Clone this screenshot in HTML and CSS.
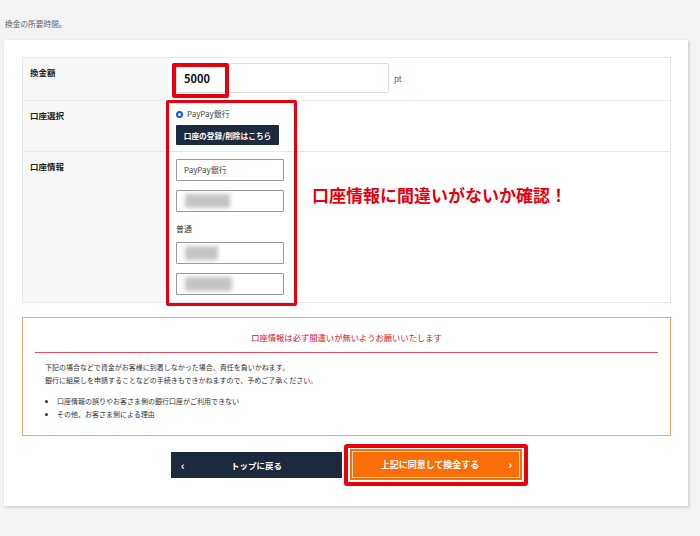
FILE: index.html
```html
<!DOCTYPE html>
<html lang="ja">
<head>
    <meta charset="UTF-8">
    <meta name="viewport" content="width=device-width, initial-scale=1.0">
    <title>換金</title>
    <link rel="stylesheet" href="styles.css">
</head>
<body>
    <p class="lead">換金の所要時間。</p>

    <div class="card">
        <div class="form-table">
            <div class="row row-amount">
                <div class="label">換金額</div>
                <div class="value">
                    <div class="amount-input">5000</div>
                    <span class="unit">pt</span>
                </div>
            </div>
            <div class="row row-select">
                <div class="label">口座選択</div>
                <div class="value value-col">
                    <label class="radio"><span class="radio-dot"></span>PayPay銀行</label>
                    <button class="btn-small">口座の登録/削除はこちら</button>
                </div>
            </div>
            <div class="row row-info">
                <div class="label">口座情報</div>
                <div class="value value-info">
                    <div class="fields">
                        <div class="field">PayPay銀行</div>
                        <div class="field"><span class="blur w45"></span></div>
                        <div class="field-label">普通</div>
                        <div class="field"><span class="blur w33"></span></div>
                        <div class="field"><span class="blur w47"></span></div>
                    </div>
                    <p class="check-note">口座情報に間違いがないか確認！</p>
                </div>
            </div>

            <div class="mark mark-amount"></div>
            <div class="mark mark-account"></div>
        </div>

        <div class="notice">
            <h3 class="notice-title">口座情報は必ず間違いが無いようお願いいたします</h3>
            <div class="notice-body">
                <p>下記の場合などで資金がお客様に到着しなかった場合、責任を負いかねます。<br>
                銀行に組戻しを申請することなどの手続きもできかねますので、予めご了承ください。</p>
                <ul>
                    <li>口座情報の誤りやお客さま側の銀行口座がご利用できない</li>
                    <li>その他、お客さま側による理由</li>
                </ul>
            </div>
        </div>

        <div class="actions">
            <button class="btn btn-back"><span class="arrow">‹</span>トップに戻る</button>
            <span class="mark-btn">
                <button class="btn btn-submit">上記に同意して換金する<span class="arrow">›</span></button>
            </span>
        </div>
    </div>
</body>
</html>
```

FILE: styles.css
```css
* {
    box-sizing: border-box;
}
body {
    margin: 0;
    background: #f3f3f3;
    font-family: "Noto Sans CJK JP", "Noto Sans", sans-serif;
    color: #333;
    height: 536px;
    overflow: hidden;
}
.lead {
    margin: 18px 0 10px 5px;
    font-size: 7.7px;
    line-height: 12px;
    color: #666;
}
.card {
    margin-left: 4px;
    width: 684px;
    height: 466px;
    background: #fff;
    padding: 17px 17px 18px 18px;
    box-shadow: 1px 1px 3px rgba(0,0,0,0.2);
}
.form-table {
    position: relative;
    width: 649px;
    border: 1px solid #e8e8e8;
}
.row {
    display: flex;
    border-bottom: 1px solid #e8e8e8;
}
.row-amount { height: 43px; }
.row-select { height: 51px; }
.row-info {
    height: 150px;
    border-bottom: none;
}
.label {
    width: 145px;
    background: #f7f7f7;
    padding: 8px 7px;
    font-size: 8.5px;
    font-weight: bold;
    color: #222;
    line-height: 12px;
}
.value {
    flex: 1;
    padding: 5px 0 0 8px;
    display: flex;
    align-items: flex-start;
}
.amount-input {
    width: 213px;
    height: 30px;
    border: 1px solid #ddd;
    border-radius: 2px;
    padding: 0 0 0 7px;
    font-size: 11px;
    font-weight: bold;
    line-height: 28px;
    color: #111;
}
.unit {
    margin: 10px 0 0 5px;
    font-size: 8px;
    color: #555;
}
.value-col {
    flex-direction: column;
    padding: 7px 0 0 8px;
}
.radio {
    display: flex;
    align-items: center;
    font-size: 8px;
    color: #444;
    line-height: 12px;
}
.radio-dot {
    width: 7px;
    height: 7px;
    border-radius: 50%;
    border: 2px solid #1c5bd6;
    margin-right: 4px;
}
.btn-small {
    margin-top: 5px;
    width: 103px;
    height: 20px;
    border: none;
    border-radius: 1px;
    background: #1d2a3d;
    color: #fff;
    font-family: inherit;
    font-size: 7.7px;
    font-weight: bold;
    padding: 0;
}
.value-info {
    padding: 7px 0 0 8px;
}
.fields {
    width: 108px;
    display: flex;
    flex-direction: column;
    gap: 9px;
}
.field {
    position: relative;
    height: 22px;
    border: 1px solid #9a9a9a;
    border-radius: 1px;
    padding-left: 7px;
    font-size: 8px;
    line-height: 20px;
    color: #444;
}
.field-label {
    font-size: 8px;
    line-height: 12px;
    margin: 2px 0 -2px;
    color: #333;
}
.blur {
    position: absolute;
    left: 8px;
    top: 3px;
    height: 14px;
    background: #c4c4c4;
    filter: blur(2px);
}
.w45 { width: 45px; }
.w33 { width: 33px; }
.w47 { width: 47px; }
.check-note {
    margin: 26px 0 0 28px;
    font-size: 17px;
    line-height: 20px;
    font-weight: bold;
    color: #e5000f;
}
.mark {
    position: absolute;
    border: 4px solid #e8000b;
    border-radius: 2px;
}
.mark-amount {
    left: 149px;
    top: 5px;
    width: 57px;
    height: 35px;
}
.mark-account {
    left: 143px;
    top: 42px;
    width: 131px;
    height: 206px;
    border-width: 3.5px;
}
.notice {
    margin-top: 14px;
    width: 649px;
    height: 119px;
    border: 1px solid #f3a46a;
    padding: 0 12px;
}
.notice-title {
    margin: 0;
    padding: 12px 0 8px;
    text-align: center;
    font-size: 8.3px;
    line-height: 14px;
    font-weight: normal;
    color: #e0101a;
    border-bottom: 1px solid #ea4a5a;
}
.notice-body {
    padding: 8px 0 0 10px;
    font-size: 7px;
    line-height: 13px;
    color: #333;
}
.notice-body p {
    margin: 0;
}
.notice-body ul {
    margin: 8px 0 0;
    padding-left: 12px;
}
.actions {
    margin-top: 8px;
    padding-left: 6px;
    display: flex;
    justify-content: center;
    align-items: center;
    gap: 2px;
}
.btn {
    position: relative;
    border: none;
    color: #fff;
    font-family: inherit;
    font-weight: bold;
    padding: 0;
}
.btn-back {
    width: 171px;
    height: 26px;
    background: #1d2a3d;
    font-size: 8.5px;
}
.btn-back .arrow {
    position: absolute;
    left: 10px;
    top: 5px;
    font-size: 11px;
}
.mark-btn {
    display: inline-flex;
    border: 4px solid #e8000b;
    border-radius: 3px;
    padding: 1px 2px 2px;
}
.btn-submit {
    width: 172px;
    height: 31px;
    background: #fa6e08;
    font-size: 9px;
    padding-right: 12px;
    outline: 1px solid rgba(255,255,255,0.75);
    outline-offset: -3px;
}
.btn-submit .arrow {
    position: absolute;
    right: 10px;
    top: 7px;
    font-size: 11px;
}
```
